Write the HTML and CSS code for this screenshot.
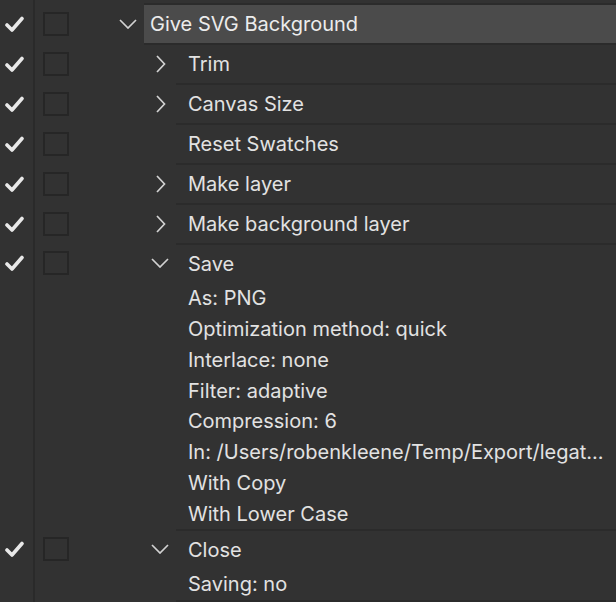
FILE: index.html
```html
<!DOCTYPE html>
<html>
<head>
<meta charset="utf-8">
<link rel="stylesheet" href="styles.css">
</head>
<body>
<div class="list">
  <div class="row top">
    <div class="chk"><svg class="tick" width="19" height="17" viewBox="0 0 19 17"><path d="M2 9 L7 14 L17 2.5"/></svg></div>
    <div class="boxcol"><span class="box"></span></div>
    <div class="toggle"><svg class="down" width="18" height="10" viewBox="0 0 18 10"><path d="M1 1 L9 9 L17 1"/></svg></div>
    <div class="label sel">Give SVG Background</div>
  </div>

  <div class="row">
    <div class="chk"><svg class="tick" width="19" height="17" viewBox="0 0 19 17"><path d="M2 9 L7 14 L17 2.5"/></svg></div>
    <div class="boxcol"><span class="box"></span></div>
    <div class="indent"></div>
    <div class="toggle"><svg class="right" width="10" height="18" viewBox="0 0 10 18"><path d="M1 1 L8.5 9 L1 17"/></svg></div>
    <div class="label child">Trim</div>
  </div>

  <div class="row">
    <div class="chk"><svg class="tick" width="19" height="17" viewBox="0 0 19 17"><path d="M2 9 L7 14 L17 2.5"/></svg></div>
    <div class="boxcol"><span class="box"></span></div>
    <div class="indent"></div>
    <div class="toggle"><svg class="right" width="10" height="18" viewBox="0 0 10 18"><path d="M1 1 L8.5 9 L1 17"/></svg></div>
    <div class="label child">Canvas Size</div>
  </div>

  <div class="row">
    <div class="chk"><svg class="tick" width="19" height="17" viewBox="0 0 19 17"><path d="M2 9 L7 14 L17 2.5"/></svg></div>
    <div class="boxcol"><span class="box"></span></div>
    <div class="indent"></div>
    <div class="toggle"></div>
    <div class="label child">Reset Swatches</div>
  </div>

  <div class="row">
    <div class="chk"><svg class="tick" width="19" height="17" viewBox="0 0 19 17"><path d="M2 9 L7 14 L17 2.5"/></svg></div>
    <div class="boxcol"><span class="box"></span></div>
    <div class="indent"></div>
    <div class="toggle"><svg class="right" width="10" height="18" viewBox="0 0 10 18"><path d="M1 1 L8.5 9 L1 17"/></svg></div>
    <div class="label child">Make layer</div>
  </div>

  <div class="row">
    <div class="chk"><svg class="tick" width="19" height="17" viewBox="0 0 19 17"><path d="M2 9 L7 14 L17 2.5"/></svg></div>
    <div class="boxcol"><span class="box"></span></div>
    <div class="indent"></div>
    <div class="toggle"><svg class="right" width="10" height="18" viewBox="0 0 10 18"><path d="M1 1 L8.5 9 L1 17"/></svg></div>
    <div class="label child">Make background layer</div>
  </div>

  <div class="group">
    <div class="row">
      <div class="chk"><svg class="tick" width="19" height="17" viewBox="0 0 19 17"><path d="M2 9 L7 14 L17 2.5"/></svg></div>
      <div class="boxcol"><span class="box"></span></div>
      <div class="indent"></div>
      <div class="toggle"><svg class="down" width="18" height="10" viewBox="0 0 18 10"><path d="M1 1 L9 9 L17 1"/></svg></div>
      <div class="label child open">Save</div>
    </div>
    <div class="details">
      <div class="d">As: PNG</div>
      <div class="d">Optimization method: quick</div>
      <div class="d">Interlace: none</div>
      <div class="d">Filter: adaptive</div>
      <div class="d">Compression: 6</div>
      <div class="d">In: /Users/robenkleene/Temp/Export/legat...</div>
      <div class="d">With Copy</div>
      <div class="d">With Lower Case</div>
    </div>
  </div>

  <div class="group">
    <div class="row">
      <div class="chk"><svg class="tick" width="19" height="17" viewBox="0 0 19 17"><path d="M2 9 L7 14 L17 2.5"/></svg></div>
      <div class="boxcol"><span class="box"></span></div>
      <div class="indent"></div>
      <div class="toggle"><svg class="down" width="18" height="10" viewBox="0 0 18 10"><path d="M1 1 L9 9 L17 1"/></svg></div>
      <div class="label child open">Close</div>
    </div>
    <div class="details">
      <div class="d">Saving: no</div>
    </div>
  </div>
</div>
</body>
</html>
```

FILE: styles.css
```css
html, body {
  margin: 0;
  padding: 0;
  background: #323232;
  height: 100%;
  overflow: hidden;
}

body {
  font-family: Inter, "Noto Sans", sans-serif;
  font-size: 20px;
  color: #e2e2e2;
}

.list {
  display: flex;
  flex-direction: column;
  padding-top: 5px;
  background: linear-gradient(to right, transparent 33px, #2a2a2a 33px, #2a2a2a 35px, transparent 35px);
  min-height: 100%;
}

.row {
  display: flex;
  align-items: stretch;
  height: 40px;
}

.chk {
  width: 35px;
  flex: none;
  display: flex;
  align-items: center;
  justify-content: flex-start;
  padding-left: 5px;
  box-sizing: border-box;
  padding-bottom: 2px;
}

.tick path {
  fill: none;
  stroke: #e8e8e8;
  stroke-width: 3.6;
  stroke-linecap: round;
  stroke-linejoin: round;
}

.boxcol {
  width: 77px;
  flex: none;
  display: flex;
  align-items: center;
  padding-left: 8px;
  box-sizing: border-box;
  padding-bottom: 2px;
}

.box {
  width: 26px;
  height: 24px;
  box-sizing: border-box;
  border: 2px solid #262626;
}

.indent {
  width: 32px;
  flex: none;
}

.toggle {
  width: 32px;
  flex: none;
  display: flex;
  align-items: center;
  justify-content: center;
  padding-bottom: 2px;
  box-sizing: border-box;
}

.down path, .right path {
  fill: none;
  stroke: #d2d2d2;
  stroke-width: 1.7;
}

.right {
  margin-left: 1px;
}

.label {
  flex: 1;
  display: flex;
  align-items: center;
  border-bottom: 2px solid #2b2b2b;
  white-space: nowrap;
}

.label.sel {
  background: #4b4b4b;
  border-top: 2px solid #2b2b2b;
  padding-left: 6px;
  margin-top: -2px;
  color: #ececec;
}

.label.child {
  padding-left: 12px;
}

.label.open {
  border-bottom: none;
}

.group .row {
  height: 38px;
}

.details {
  display: flex;
  flex-direction: column;
  padding-left: 176px;
}

.d {
  height: 30.75px;
  display: flex;
  align-items: center;
  padding-left: 12px;
  white-space: nowrap;
}

.details .d:last-child {
  border-bottom: 2px solid #2b2b2b;
}
```
